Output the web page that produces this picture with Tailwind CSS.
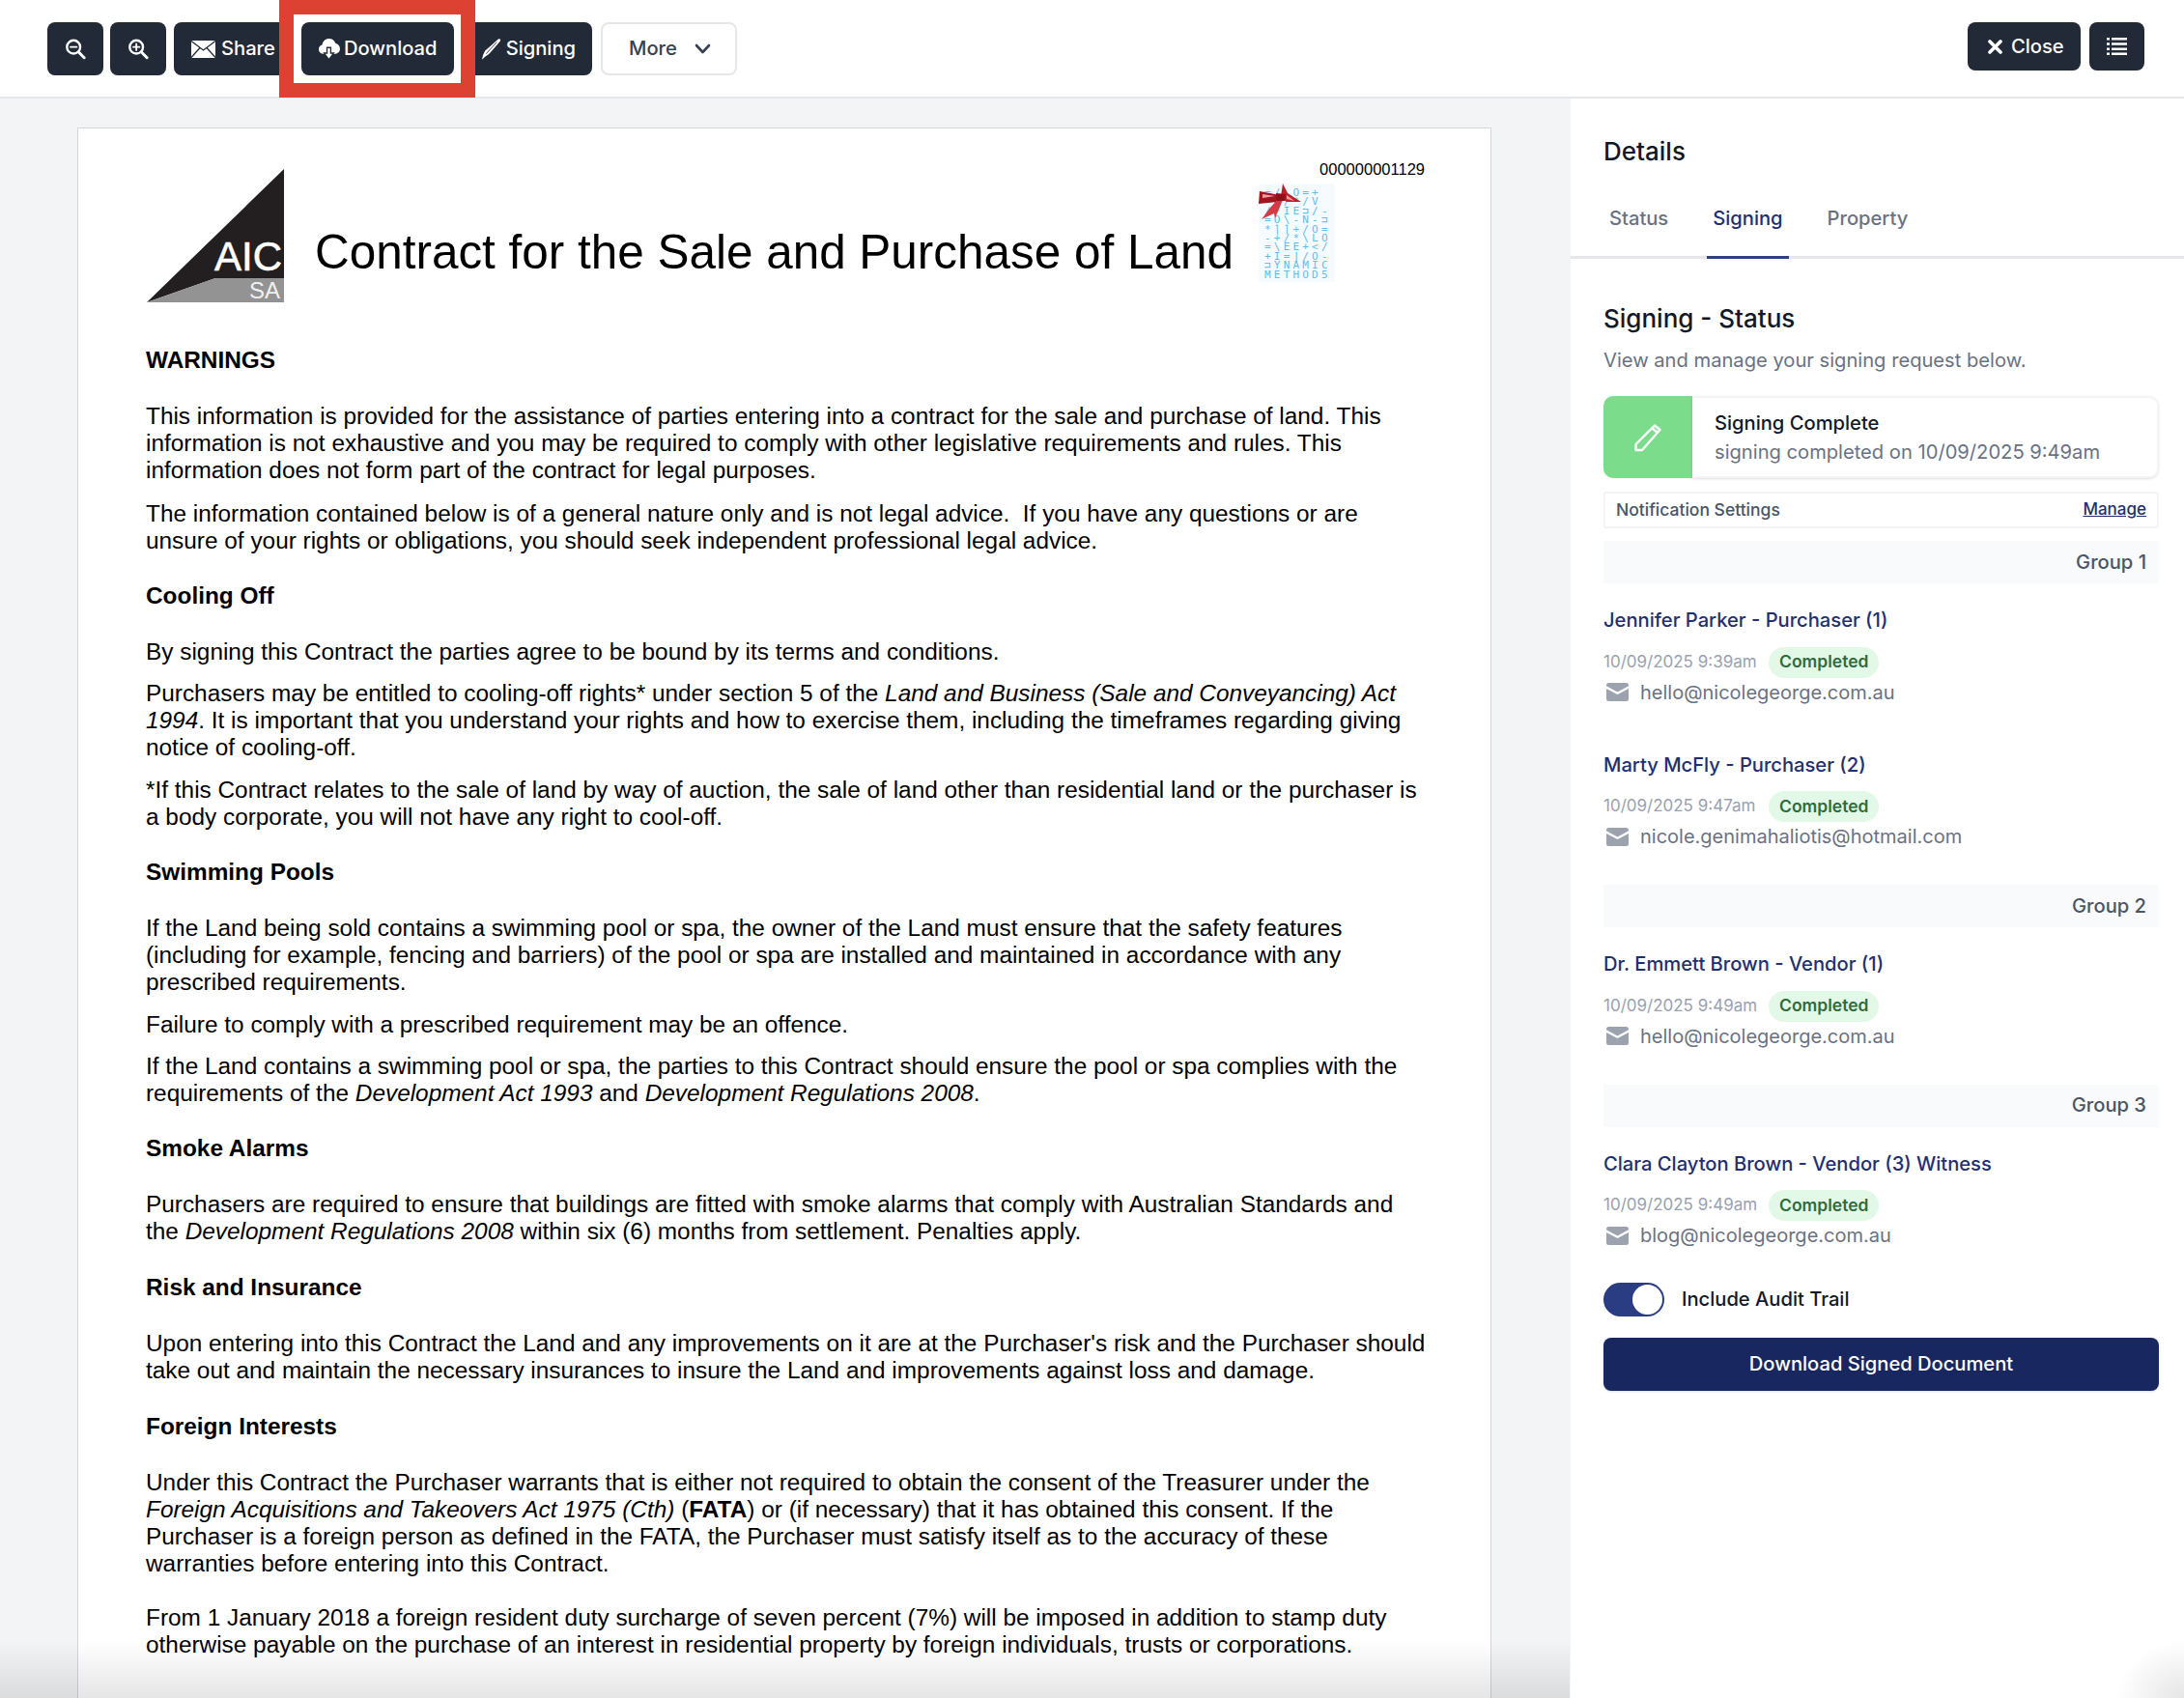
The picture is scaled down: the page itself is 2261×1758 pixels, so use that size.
<!DOCTYPE html>
<html lang="en">
<head>
<meta charset="utf-8">
<title>Contract</title>
<script src="https://cdn.jsdelivr.net/npm/@tailwindcss/browser@4"></script>
</head>
<body class="m-0 bg-white">
<div class="relative w-[2261px] h-[1758px] overflow-hidden flex flex-col font-['Inter'] text-[20.15px]">

  <!-- toolbar -->
  <header class="relative h-[102px] shrink-0 bg-white border-b-2 border-gray-200 pl-[49px] pr-[41px] pt-[23px] flex justify-between items-start">
    <div class="flex gap-[7px] items-start">
      <button class="w-[58px] h-[55px] rounded-[8px] bg-[#222a38] flex items-center justify-center text-white">
        <svg class="w-[22px] h-[23px]" viewBox="0 0 24 24" fill="none" stroke="currentColor" stroke-width="2.6" stroke-linecap="round"><circle cx="10" cy="10" r="7.5"/><path d="M15.5 15.5 L22 22" stroke-width="3.2"/><path d="M6.5 10h7" stroke-width="2"/></svg>
      </button>
      <button class="w-[58px] h-[55px] rounded-[8px] bg-[#222a38] flex items-center justify-center text-white">
        <svg class="w-[22px] h-[23px]" viewBox="0 0 24 24" fill="none" stroke="currentColor" stroke-width="2.6" stroke-linecap="round"><circle cx="10" cy="10" r="7.5"/><path d="M15.5 15.5 L22 22" stroke-width="3.2"/><path d="M6.5 10h7M10 6.5v7" stroke-width="2"/></svg>
      </button>
      <button class="ml-[1px] w-[125px] h-[55px] rounded-[8px] bg-[#222a38] flex items-center pl-[18px] gap-[6px] text-white font-medium">
        <svg class="w-[25px] h-[18px]" viewBox="0 0 25 18"><path fill="#fff" d="M0 0h25v18H0z"/><path d="M0 .5 12.5 10 25 .5M0 17.5 9 7.5M25 17.5 16 7.5" fill="none" stroke="#222a38" stroke-width="1.3"/></svg>
        <span>Share</span>
      </button>
      <button class="relative z-20 w-[158px] h-[55px] rounded-[8px] bg-[#222a38] flex items-center pl-[18px] gap-[4px] text-white font-medium">
        <svg class="w-[22px] h-[22px]" viewBox="0 0 21 21"><path fill="#fff" d="M5 15C2 15 0 13 0 10.4 0 8.200 1.400 6.600 3.400 6.200 3.800 2.400 6.800 0 10.200 0c3 0 5.400 1.800 6.300 4.500C19 5 21 7.200 21 10c0 2.800-2.200 5-5 5Z"/><path fill="#222a38" d="M7.500 8h5v5.500h3.500L10 21 4 13.500h3.500Z"/><path fill="#fff" d="M8.800 9.500h2.400v5.500h2.300L10 19.500 6.500 15h2.300Z"/></svg>
        <span>Download</span>
      </button>
      <button class="w-[136px] h-[55px] rounded-[8px] bg-[#222a38] flex items-center justify-end pr-[17px] gap-[5px] text-white font-medium">
        <svg class="w-[21px] h-[22px]" viewBox="0 0 20 21"><path fill="#fff" d="M17 .5c1.500-.6 2.700.5 2 2L8 15l-4 3-3 2.800.2-1.500L2 16l2-4Z"/><path d="M15.500 3.500 5 15" stroke="#222a38" stroke-width=".8" fill="none"/></svg>
        <span>Signing</span>
      </button>
      <button class="ml-[2px] w-[141px] h-[55px] rounded-[8px] bg-white border-2 border-gray-200 flex items-center pl-[27px] gap-[18px] text-[#374151] font-medium">
        <span>More</span>
        <svg class="w-[17px] h-[11px]" viewBox="0 0 17 11" fill="none" stroke="#374151" stroke-width="2.6" stroke-linecap="round" stroke-linejoin="round"><path d="M2 2l6.500 7L15 2"/></svg>
      </button>
    </div>
    <div class="flex gap-[9px] items-start">
      <button class="w-[117px] h-[50px] rounded-[8px] bg-[#222a38] flex items-center pl-[21px] gap-[9px] text-white font-medium">
        <svg class="w-[15px] h-[15px]" viewBox="0 0 15 15" fill="none" stroke="#fff" stroke-width="3.6" stroke-linecap="round"><path d="M2 2l11 11M13 2L2 13"/></svg>
        <span>Close</span>
      </button>
      <button class="w-[57px] h-[50px] rounded-[8px] bg-[#222a38] flex items-center justify-center">
        <svg class="w-[21px] h-[18px]" viewBox="0 0 21 18" fill="#fff"><path d="M0 0h3v2.500H0zM5 0h16v2.500H5zM0 5.200h3v2.500H0zM5 5.200h16v2.500H5zM0 10.400h3v2.500H0zM5 10.400h16v2.500H5zM0 15.500h3V18H0zM5 15.500h16V18H5z"/></svg>
      </button>
    </div>
    <!-- red annotation box -->
    <div class="absolute left-[289px] top-0 w-[203px] h-[101px] z-10 bg-white border-[15px] border-[#dc4132]"></div>
  </header>

  <div class="flex-1 flex min-h-0">
    <!-- document area -->
    <main class="relative w-[1625px] shrink-0 bg-[#f3f4f6] pl-[80px] pt-[30px] overflow-hidden">
      <article class="w-[1464px] h-[1700px] bg-white border border-gray-300 pl-[70px] pt-[30px] font-['Liberation_Sans'] text-[24.38px] leading-[28px] text-black whitespace-nowrap">
        <div class="flex h-[150px] items-start">
          <svg class="w-[142px] h-[138px] ml-[1px] mt-[12px] shrink-0" viewBox="0 0 142 138">
            <path fill="#231f20" d="M0 138 142 0v113H71Z"/>
            <path fill="#939393" d="M0 138 71 113h71v25Z"/>
            <text x="140" y="105" text-anchor="end" font-family="Liberation Sans" font-size="42" fill="#fff" stroke="#fff" stroke-width=".6">AIC</text>
            <text x="138" y="134" text-anchor="end" font-family="Liberation Sans" font-size="24" fill="#f1f1f1">SA</text>
          </svg>
          <h1 class="w-[977px] ml-[32px] mt-[68px] shrink-0 text-[49.45px] leading-[60px] font-normal">Contract for the Sale and Purchase of Land</h1>
          <div class="w-[172px] shrink-0">
            <div class="text-[16.5px] leading-[24px] text-right">000000001129</div>
            <div class="relative mt-[3px] w-[79px] h-[102px] bg-[#f6fbff] pt-[5px] pl-[6px] font-['DejaVu_Sans_Mono'] text-[11px] leading-[9.4px] tracking-[3.2px] text-[#5fbdf0]">
              <div>=/\O=+</div>
              <div>==/*/V</div>
              <div>/*IE⊐/-</div>
              <div>=O\-N-⊐</div>
              <div>*⌉⌉+/O=</div>
              <div>-+/*\LO</div>
              <div>=\EE+&lt;/</div>
              <div>+I=⌋/O-</div>
              <div>⊐YNAMIC</div>
              <div>METHOD5</div>
              <svg class="absolute left-0 top-0 w-[45px] h-[38px]" viewBox="0 0 45 38">
                <path fill="#c01f2a" d="M23 13 L25 0 L30 10 L44 19 L29 19 L24 16Z"/>
                <path fill="#a3141f" d="M22 12 L1 8 L0 21 L19 19Z"/>
                <path fill="#d23a44" d="M21 15 L12 25 L3 37 L16 31 L17 36 L25 17Z"/>
                <path fill="#8f0f1a" d="M18 10 L28 11 L27 18 L19 18Z"/>
                <path fill="#f0a0a5" d="M4 11 L17 13 L4 15Z M29 12 L37 18 L29 16Z"/>
              </svg>
            </div>
          </div>
        </div>

        <h2 class="mt-[46px] mb-[30px] font-bold">WARNINGS</h2>
        <p class="mb-[17px]">This information is provided for the assistance of parties entering into a contract for the sale and purchase of land. This<br>information is not exhaustive and you may be required to comply with other legislative requirements and rules. This<br>information does not form part of the contract for legal purposes.</p>
        <p>The information contained below is of a general nature only and is not legal advice.&nbsp; If you have any questions or are<br>unsure of your rights or obligations, you should seek independent professional legal advice.</p>

        <h2 class="mt-[29px] mb-[30px] font-bold">Cooling Off</h2>
        <p class="mb-[15px]">By signing this Contract the parties agree to be bound by its terms and conditions.</p>
        <p class="mb-[16px]">Purchasers may be entitled to cooling-off rights* under section 5 of the <em>Land and Business (Sale and Conveyancing) Act</em><br><em>1994</em>. It is important that you understand your rights and how to exercise them, including the timeframes regarding giving<br>notice of cooling-off.</p>
        <p>*If this Contract relates to the sale of land by way of auction, the sale of land other than residential land or the purchaser is<br>a body corporate, you will not have any right to cool-off.</p>

        <h2 class="mt-[29px] mb-[30px] font-bold">Swimming Pools</h2>
        <p class="mb-[16px]">If the Land being sold contains a swimming pool or spa, the owner of the Land must ensure that the safety features<br>(including for example, fencing and barriers) of the pool or spa are installed and maintained in accordance with any<br>prescribed requirements.</p>
        <p class="mb-[15px]">Failure to comply with a prescribed requirement may be an offence.</p>
        <p>If the Land contains a swimming pool or spa, the parties to this Contract should ensure the pool or spa complies with the<br>requirements of the <em>Development Act 1993</em> and <em>Development Regulations 2008</em>.</p>

        <h2 class="mt-[29px] mb-[30px] font-bold">Smoke Alarms</h2>
        <p>Purchasers are required to ensure that buildings are fitted with smoke alarms that comply with Australian Standards and<br>the <em>Development Regulations 2008</em> within six (6) months from settlement. Penalties apply.</p>

        <h2 class="mt-[30px] mb-[30px] font-bold">Risk and Insurance</h2>
        <p>Upon entering into this Contract the Land and any improvements on it are at the Purchaser's risk and the Purchaser should<br>take out and maintain the necessary insurances to insure the Land and improvements against loss and damage.</p>

        <h2 class="mt-[30px] mb-[30px] font-bold">Foreign Interests</h2>
        <p class="mb-[28px]">Under this Contract the Purchaser warrants that is either not required to obtain the consent of the Treasurer under the<br><em>Foreign Acquisitions and Takeovers Act 1975 (Cth)</em> (<strong>FATA</strong>) or (if necessary) that it has obtained this consent. If the<br>Purchaser is a foreign person as defined in the FATA, the Purchaser must satisfy itself as to the accuracy of these<br>warranties before entering into this Contract.</p>
        <p>From 1 January 2018 a foreign resident duty surcharge of seven percent (7%) will be imposed in addition to stamp duty<br>otherwise payable on the purchase of an interest in residential property by foreign individuals, trusts or corporations.</p>
      </article>
      <div class="absolute left-0 right-0 bottom-0 h-[60px] bg-gradient-to-b from-black/0 to-black/10"></div>
    </main>

    <!-- details sidebar -->
    <aside class="relative flex-1 bg-white border-l border-gray-100">
      <h2 class="mt-[37px] ml-[34px] text-[26px] leading-[36px] font-medium text-[#111827]">Details</h2>
      <nav class="mt-[28px] h-[65px] border-b-[3px] border-gray-200 flex pl-[34px] text-gray-500 font-medium">
        <span class="px-[6px] pt-[8px] h-[65px]">Status</span>
        <span class="ml-[34px] px-[6px] pt-[8px] h-[65px] border-b-[3px] border-[#2d3f87] text-[#1f2f70]">Signing</span>
        <span class="ml-[34px] px-[6px] pt-[8px] h-[65px]">Property</span>
      </nav>

      <div class="pl-[34px] pr-[26px]">
        <h3 class="mt-[44px] text-[26px] leading-[36px] font-medium text-[#111827]">Signing - Status</h3>
        <p class="mt-[11px] leading-[28px] text-gray-500">View and manage your signing request below.</p>

        <div class="mt-[23px] h-[85px] flex">
          <div class="w-[92px] rounded-l-[10px] bg-[#7bdc8b] flex items-center justify-center shrink-0">
            <svg class="w-[30px] h-[30px]" viewBox="0 0 30 30" fill="none" stroke="#fff" stroke-width="2.4" stroke-linejoin="round"><path d="M22 2.500 27.500 7 9 28H2.500V22Z"/><path d="M19.500 5.500 25 10"/></svg>
          </div>
          <div class="flex-1 rounded-r-[10px] border-2 border-l-0 border-gray-100 shadow-sm pl-[23px] pt-[12px]">
            <div class="leading-[28px] font-medium text-[#111827]">Signing Complete</div>
            <div class="mt-[2px] leading-[28px] text-gray-500">signing completed on 10/09/2025 9:49am</div>
          </div>
        </div>

        <div class="mt-[14px] h-[38px] rounded-[3px] border-2 border-gray-100 px-[11px] flex items-center justify-between text-[17.5px] font-medium">
          <span class="text-gray-600">Notification Settings</span>
          <a class="text-[17px] text-[#1f2f70] underline">Manage</a>
        </div>

        <div class="mt-[13px] h-[44px] bg-gray-50 flex items-center justify-end pr-[13px] text-gray-600 font-medium">Group 1</div>

        <div class="mt-[24px]">
          <div class="leading-[28px] font-medium text-[#1f2f70]">Jennifer Parker - Purchaser (1)</div>
          <div class="mt-[13.5px] h-[32px] flex items-center gap-[13px]"><span class="w-[158px] text-[17px] text-gray-400 whitespace-nowrap">10/09/2025 9:39am</span><span class="h-[32px] px-[11px] rounded-full bg-[#e3f9e8] text-[#2f6b3c] text-[17.5px] font-semibold flex items-center">Completed</span></div>
          <div class="mt-[1px] h-[28px] flex items-center text-[20px] text-gray-500"><svg class="ml-[3px] w-[23px] h-[19px] mr-[12px]" viewBox="0 0 23 19" fill="#9ca3af"><path d="M0 2.500A2.500 2.500 0 0 1 2.500 0h18A2.500 2.500 0 0 1 23 2.500v.8L11.500 9.500 0 3.300Z"/><path d="M0 6l11.500 6L23 6v10.500a2.500 2.500 0 0 1-2.500 2.500h-18A2.500 2.500 0 0 1 0 16.500Z"/></svg>hello@nicolegeorge.com.au</div>
        </div>

        <div class="mt-[47px]">
          <div class="leading-[28px] font-medium text-[#1f2f70]">Marty McFly - Purchaser (2)</div>
          <div class="mt-[13.5px] h-[32px] flex items-center gap-[13px]"><span class="w-[158px] text-[17px] text-gray-400 whitespace-nowrap">10/09/2025 9:47am</span><span class="h-[32px] px-[11px] rounded-full bg-[#e3f9e8] text-[#2f6b3c] text-[17.5px] font-semibold flex items-center">Completed</span></div>
          <div class="mt-[1px] h-[28px] flex items-center text-[20px] text-gray-500"><svg class="ml-[3px] w-[23px] h-[19px] mr-[12px]" viewBox="0 0 23 19" fill="#9ca3af"><path d="M0 2.500A2.500 2.500 0 0 1 2.500 0h18A2.500 2.500 0 0 1 23 2.500v.8L11.500 9.500 0 3.300Z"/><path d="M0 6l11.500 6L23 6v10.500a2.500 2.500 0 0 1-2.500 2.500h-18A2.500 2.500 0 0 1 0 16.500Z"/></svg>nicole.genimahaliotis@hotmail.com</div>
        </div>

        <div class="mt-[36px] h-[44px] bg-gray-50 flex items-center justify-end pr-[13px] text-gray-600 font-medium">Group 2</div>

        <div class="mt-[24px]">
          <div class="leading-[28px] font-medium text-[#1f2f70]">Dr. Emmett Brown - Vendor (1)</div>
          <div class="mt-[13.5px] h-[32px] flex items-center gap-[13px]"><span class="w-[158px] text-[17px] text-gray-400 whitespace-nowrap">10/09/2025 9:49am</span><span class="h-[32px] px-[11px] rounded-full bg-[#e3f9e8] text-[#2f6b3c] text-[17.5px] font-semibold flex items-center">Completed</span></div>
          <div class="mt-[1px] h-[28px] flex items-center text-[20px] text-gray-500"><svg class="ml-[3px] w-[23px] h-[19px] mr-[12px]" viewBox="0 0 23 19" fill="#9ca3af"><path d="M0 2.500A2.500 2.500 0 0 1 2.500 0h18A2.500 2.500 0 0 1 23 2.500v.8L11.500 9.500 0 3.300Z"/><path d="M0 6l11.500 6L23 6v10.500a2.500 2.500 0 0 1-2.500 2.500h-18A2.500 2.500 0 0 1 0 16.500Z"/></svg>hello@nicolegeorge.com.au</div>
        </div>

        <div class="mt-[36px] h-[44px] bg-gray-50 flex items-center justify-end pr-[13px] text-gray-600 font-medium">Group 3</div>

        <div class="mt-[24px]">
          <div class="leading-[28px] font-medium text-[#1f2f70]">Clara Clayton Brown - Vendor (3) Witness</div>
          <div class="mt-[13.5px] h-[32px] flex items-center gap-[13px]"><span class="w-[158px] text-[17px] text-gray-400 whitespace-nowrap">10/09/2025 9:49am</span><span class="h-[32px] px-[11px] rounded-full bg-[#e3f9e8] text-[#2f6b3c] text-[17.5px] font-semibold flex items-center">Completed</span></div>
          <div class="mt-[1px] h-[28px] flex items-center text-[20px] text-gray-500"><svg class="ml-[3px] w-[23px] h-[19px] mr-[12px]" viewBox="0 0 23 19" fill="#9ca3af"><path d="M0 2.500A2.500 2.500 0 0 1 2.500 0h18A2.500 2.500 0 0 1 23 2.500v.8L11.500 9.500 0 3.300Z"/><path d="M0 6l11.500 6L23 6v10.500a2.500 2.500 0 0 1-2.500 2.500h-18A2.500 2.500 0 0 1 0 16.500Z"/></svg>blog@nicolegeorge.com.au</div>
        </div>

        <div class="mt-[35px] flex items-center gap-[18px]">
          <div class="w-[63px] h-[35px] rounded-full bg-[#2b3d82] flex items-center justify-end pr-[2px]"><div class="w-[31px] h-[31px] rounded-full bg-white"></div></div>
          <span class="font-medium text-[#111827]">Include Audit Trail</span>
        </div>

        <button class="mt-[22px] w-full h-[55px] rounded-[8px] bg-[#18275f] text-white font-medium shadow-sm">Download Signed Document</button>
      </div>
      <div class="absolute right-0 bottom-0 w-[70px] h-[60px] bg-[radial-gradient(ellipse_at_bottom_right,rgba(0,0,0,0.1),rgba(0,0,0,0)_70%)]"></div>
    </aside>
  </div>
</div>
</body>
</html>
